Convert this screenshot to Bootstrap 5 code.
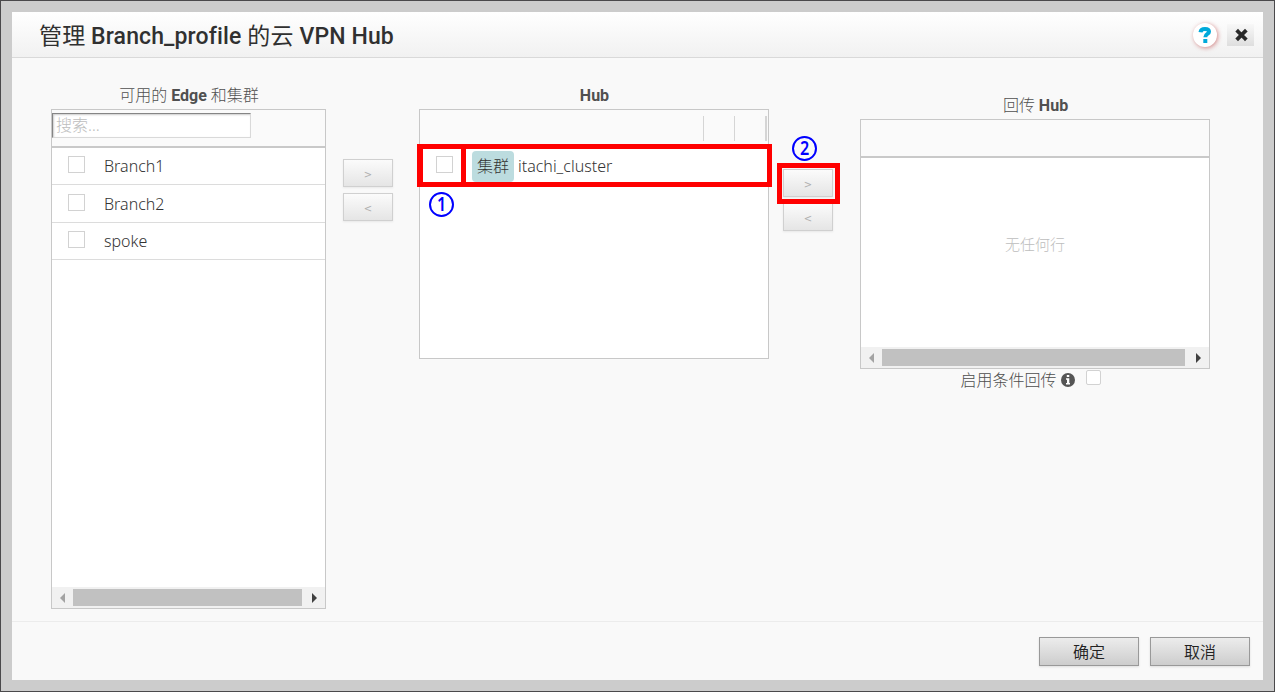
<!DOCTYPE html>
<html lang="zh-CN">
<head>
<meta charset="utf-8">
<meta name="viewport" content="width=device-width, initial-scale=1">
<title>云 VPN Hub</title>
<link href="https://cdn.jsdelivr.net/npm/bootstrap@5.3.0/dist/css/bootstrap.min.css" rel="stylesheet">
<style>
body{height:692px;padding:11px;border:1px solid #4a494b;background:#ccc;color:#4d4d4d;overflow:hidden;font:16px/20px "Noto Sans","Noto Sans CJK SC",sans-serif}
.dialog{width:1251px;height:668px;background:#f9f9f9}
.dialog-head{height:46px;padding:0 9px 0 27px;border-bottom:1px solid #d9d9d9;background:linear-gradient(#fff,#f1f1f1)}
.dialog-head h1{font:500 23px/30px Roboto,"Noto Sans CJK SC",sans-serif;color:#303030;letter-spacing:.13px;margin-top:5px}
.dialog-head h1 span{font-weight:400}
.help{width:24px;height:24px;border-radius:50%;background:#fff;box-shadow:1px 1px 4px rgba(190,70,70,.6)}
.close-btn{width:27px;height:22px;padding:0;border:0;background:linear-gradient(#f8f8f8,#dedede)}
.dialog-main{height:563px;padding:28px 0 0 39px}
.caption{height:23px;padding-left:1px;line-height:20px;font-family:Roboto,"Noto Sans CJK SC",sans-serif;font-weight:700;color:#505050;white-space:nowrap}
.caption span,.thin{font-family:"Noto Sans CJK SC",sans-serif;font-weight:300}
.caption.mixed{line-height:16px}
.w-avail{width:275px}.w-hub{width:350px}
.list-box{height:250px;border:1px solid #c8c8c8;background:#fff}
.list-box.tall{height:500px}
.list-head{height:38px;border-bottom:2px solid #c9c9c9;background:#fafafa}
.search{width:199px;height:25px;margin-top:3px;padding:0 3px 2px;border:1px solid #d9d9d9;border-top:1px solid #858585;border-left:1px solid #858585;border-radius:0;box-shadow:inset 1px 1px 2px #ccc;font:300 16px/22px "Noto Sans","Noto Sans CJK SC",sans-serif;background:#fff;outline:0}
.search::placeholder{color:#bdbdbd;opacity:1}
.item{height:37px;border-bottom:1px solid #dcdcdc;padding-left:16px;font-family:"Noto Sans",sans-serif;font-weight:300;letter-spacing:0;color:#333}
.item.odd-step{height:38px}
.tick{appearance:none;flex:none;width:17px;height:17px;margin:0;border:1px solid #d2d2d2;border-radius:0;background:#fff}
.item .tick{margin-top:-3px;margin-right:19px}
.move{width:50px;height:28px;padding:4px 0 0;border:1px solid #d0d0d0;border-radius:0;background:linear-gradient(#fbfbfb,#e5e5e5);box-shadow:0 1px 2px #e8e8e8;color:#b0b0b0;font:10px/20px "DejaVu Sans",sans-serif}
.hscroll{height:21px;background:#f1f1f1;padding:2px 8px 2px 8px}
.hscroll i{height:17px;margin:0 12px 0 8px;background:#c1c1c1}
.hscroll svg{flex:none}
.sep{width:31px;height:25px;border-left:1px solid #d5d5d5;margin-top:6px}
.cluster{width:42px;height:31px;border-radius:4px;background:#bcdcdf;font:300 16px/28px "Noto Sans CJK SC",sans-serif}
.mark-row{left:-3px;top:34px;width:355px;height:43px;border:5px solid red;border-left-width:6px;pointer-events:none}
.mark-row::before{content:"";position:absolute;left:38px;top:0;bottom:0;width:5px;background:red}
.mark-move{left:-6px;top:-6px;width:63px;height:41px;border:5px solid red;pointer-events:none}
.step{width:25px;height:25px;border:2px solid #00f;border-radius:50%;color:#00f;font:600 19px/21px "Noto Sans",sans-serif;text-align:center}
.step b{display:block;font-weight:600;transform:scaleX(.85)}
.step-one{left:9px;top:82px}.step-two{left:9px;top:-33px}
.dialog-foot{height:59px;border-top:1px solid #ececec;padding:15px 13px 0 0;gap:11px}
.act{width:100px;height:29px;padding:0;border:1px solid #999;border-radius:0;background:linear-gradient(#ececec,#cdcdcd);box-shadow:0 1px 2px #ddd;color:#222;font:350 16px/27px "Noto Sans CJK SC",sans-serif}
</style>
</head>
<body>
<div class="dialog d-flex flex-column">
  <header class="dialog-head d-flex align-items-center">
    <h1 class="mb-0"><span>管理</span> Branch_profile <span>的云</span> VPN Hub</h1>
    <div class="ms-auto help d-flex align-items-center justify-content-center" role="img" aria-label="帮助">
      <svg width="14" height="18" viewBox="0 0 14 18"><path d="M2.500 6.200C2.800 3.800 4.700 3 7 3c2.600 0 4 1 4 2.700C11 8.300 7.300 7.600 7.300 11.300M7.300 13v4" fill="none" stroke="#00a9da" stroke-width="4"/></svg>
    </div>
    <button class="close-btn d-flex align-items-center justify-content-center" style="margin-left:10px" aria-label="关闭"><svg width="14" height="14" viewBox="0 0 14 14"><path d="m4 3.500 7 7M11 3.500l-7 7" stroke="#282828" stroke-width="3.800" stroke-linecap="square"/></svg></button>
  </header>
  <main class="dialog-main d-flex align-items-start">
    <section class="w-avail">
      <div class="caption mixed text-center"><span>可用的</span> Edge <span>和集群</span></div>
      <div class="list-box tall d-flex flex-column">
        <div class="list-head"><input class="search d-block" placeholder="搜索…"></div>
        <div class="item d-flex align-items-center"><input type="checkbox" class="tick">Branch1</div>
        <div class="item odd-step d-flex align-items-center"><input type="checkbox" class="tick">Branch2</div>
        <div class="item d-flex align-items-center"><input type="checkbox" class="tick">spoke</div>
        <div class="hscroll mt-auto d-flex align-items-center"><svg width="5" height="10"><path d="M5 0v10L0 5z" fill="#a3a3a3"/></svg><i class="flex-grow-1" style="margin-right:10px"></i><svg width="5" height="10"><path d="M0 0v10l5-5z" fill="#404040"/></svg></div>
      </div>
    </section>
    <div class="d-flex flex-column" style="margin:73px 26px 0 17px;gap:6px"><button class="move">&gt;</button><button class="move">&lt;</button></div>
    <section class="w-hub">
      <div class="caption text-center">Hub</div>
      <div class="list-box position-relative">
        <div class="list-head d-flex justify-content-end"><div class="sep"></div><div class="sep"></div><div class="sep" style="width:3px;border-left-width:2px"></div></div>
        <div class="item d-flex align-items-center"  style="border-color:transparent"><input type="checkbox" class="tick">
          <span class="cluster text-center me-1">集群</span>itachi_cluster</div>
        <div class="mark-row position-absolute"></div>
        <div class="step step-one position-absolute"><b>1</b></div>
      </div>
    </section>
    <div class="d-flex flex-column position-relative" style="margin:83px 27px 0 14px;gap:6px"><button class="move">&gt;</button><button class="move">&lt;</button>
      <div class="mark-move position-absolute"></div><div class="step step-two position-absolute"><b>2</b></div>
    </div>
    <section class="w-hub" style="padding-top:10px">
      <div class="caption mixed text-center"><span>回传</span> Hub</div>
      <div class="list-box d-flex flex-column">
        <div class="list-head"></div>
        <div class="flex-grow-1 text-center thin" style="color:#bdbdbd;font-size:15px;padding-top:76px">无任何行</div>
        <div class="hscroll d-flex align-items-center"><svg width="5" height="10"><path d="M5 0v10L0 5z" fill="#a3a3a3"/></svg><i class="flex-grow-1" style="margin-right:11px"></i><svg width="5" height="10"><path d="M0 0v10l5-5z" fill="#404040"/></svg></div>
      </div>
      <div class="d-flex justify-content-center" style="padding-right:9px"><span class="thin">启用条件回传</span>
        <svg width="14" height="14" viewBox="0 0 14 14" style="margin:4px 11px 0 4px"><circle cx="7" cy="7" r="7" fill="#555"/><path d="M5.800 2h2.500v2H5.800zM5 5.200h3.300v4.800H9v1.500H5V10h1V6.700H5z" fill="#fff"/></svg>
        <input type="checkbox" class="tick" style="width:15px;height:15px;margin-top:1px;border-radius:2px">
      </div>
    </section>
  </main>
  <footer class="dialog-foot d-flex justify-content-end"><button class="act">确定</button><button class="act">取消</button></footer>
</div>
<script src="https://cdn.jsdelivr.net/npm/bootstrap@5.3.0/dist/js/bootstrap.bundle.min.js"></script>
</body>
</html>
